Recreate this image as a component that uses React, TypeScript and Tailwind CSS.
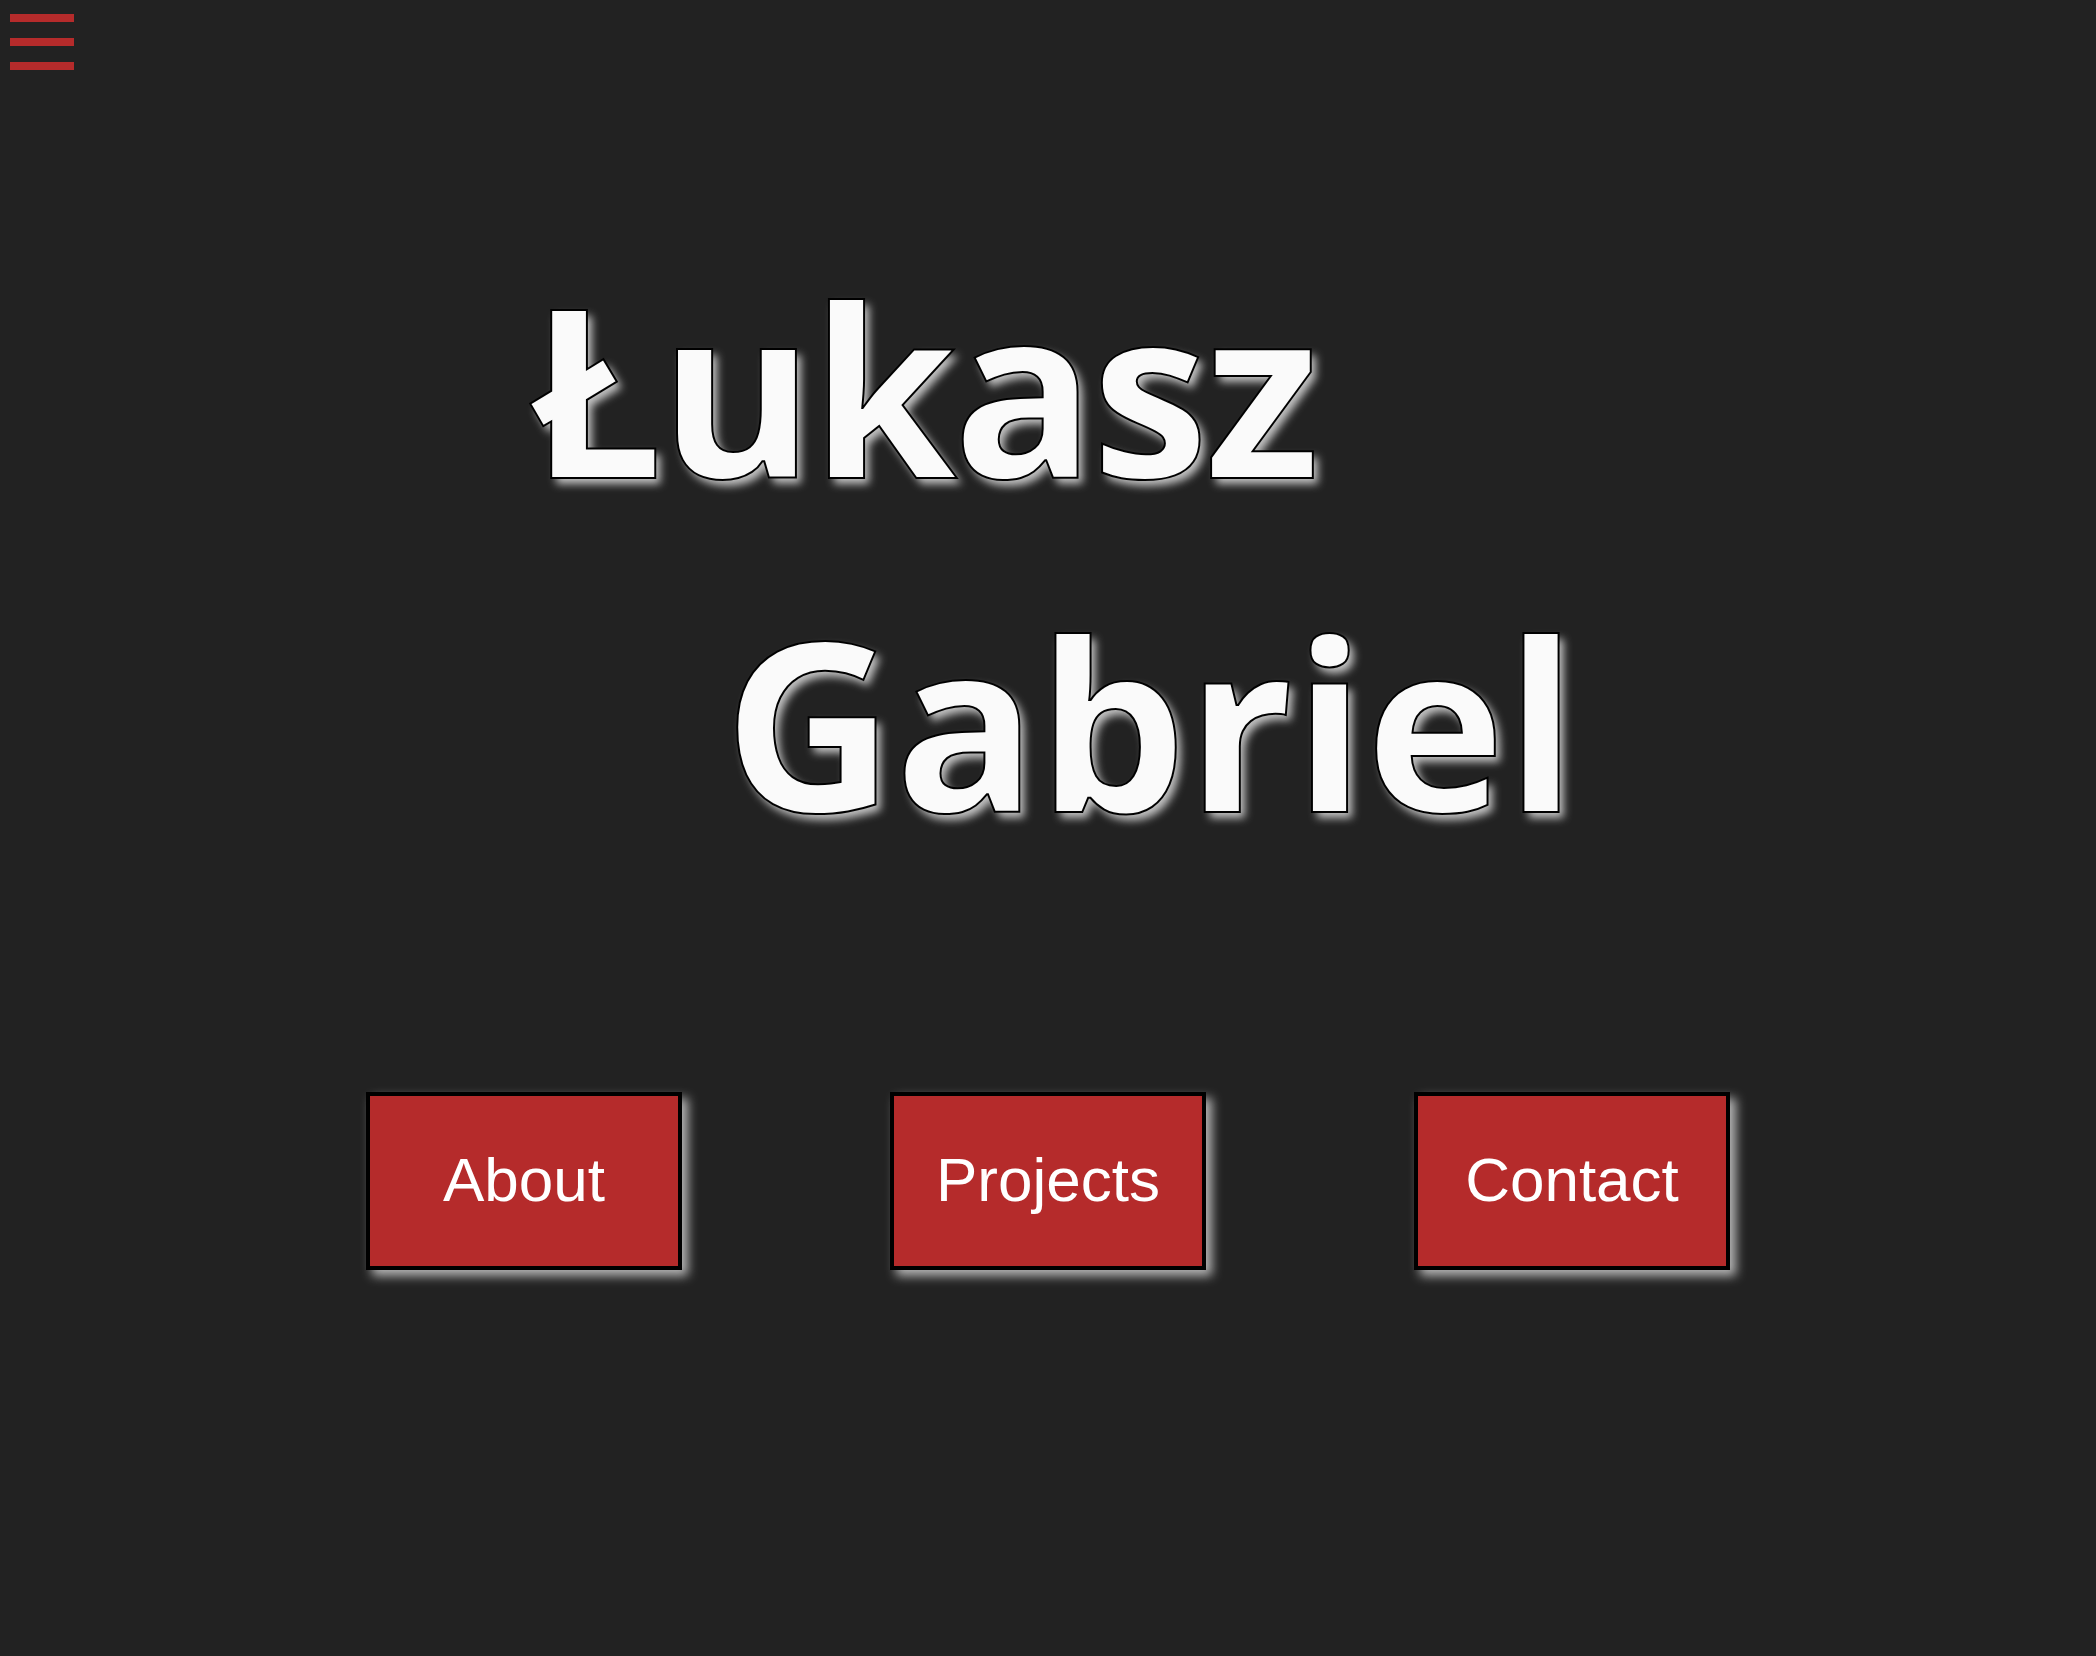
export default function App() {
  const links = ['About', 'Projects', 'Contact']

  return (
    <div className="min-h-screen bg-[#222222] font-['Liberation_Sans',Arial,sans-serif]">
      {/* menu toggle */}
      <button className="flex flex-col gap-[16px] pl-[10px] pt-[14px]" aria-label="Menu">
        <span className="block w-[64px] h-[8px] bg-[#b52b2b]" />
        <span className="block w-[64px] h-[8px] bg-[#b52b2b]" />
        <span className="block w-[64px] h-[8px] bg-[#b52b2b]" />
      </button>

      <main className="flex flex-col items-center">
        <h1 className="mt-[150px] w-[1036px] flex flex-col font-['Open_Sans',sans-serif] font-bold text-[236px] leading-[334px] text-[#fafafa] [-webkit-text-stroke:2px_#000] [text-shadow:5px_6px_8px_#c4c4c4]">
          <span className="self-start tracking-[-4px]">Łukasz</span>
          <span className="self-end mr-[-11px]">Gabriel</span>
        </h1>

        <nav className="mt-[204px] flex gap-[208px]">
          {links.map((label) => (
            <a
              key={label}
              href={`#${label.toLowerCase()}`}
              className="w-[316px] h-[178px] flex items-center justify-center pb-[4px] bg-[#b52b2b] border-4 border-black text-white text-[62px] [box-shadow:6px_6px_10px_#b5b5b5]"
            >
              {label}
            </a>
          ))}
        </nav>
      </main>
    </div>
  )
}
